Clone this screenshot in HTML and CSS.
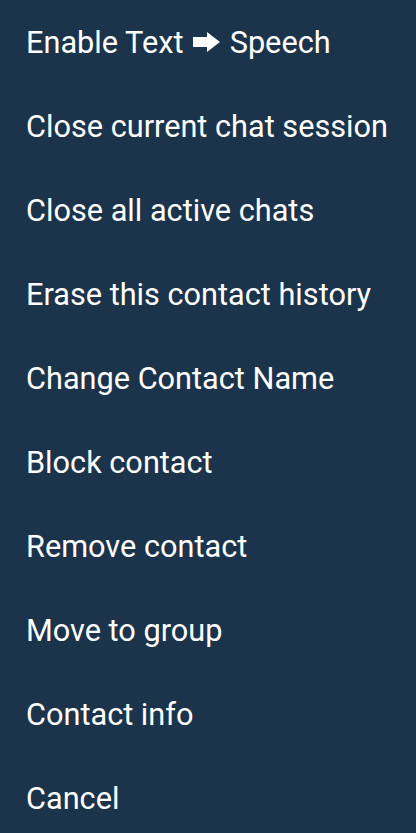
FILE: index.html
```html
<!DOCTYPE html>
<html>
<head>
<meta charset="utf-8">
<link rel="stylesheet" href="styles.css">
</head>
<body>
<ul class="menu">
  <li class="item">Enable Text <svg class="arrow" width="27" height="20" viewBox="0 0 27 20"><path d="M0 5H14V0L27 10L14 20V15H0Z" fill="#fff"/></svg> Speech</li>
  <li class="item">Close current chat session</li>
  <li class="item">Close all active chats</li>
  <li class="item">Erase this contact history</li>
  <li class="item">Change Contact Name</li>
  <li class="item">Block contact</li>
  <li class="item">Remove contact</li>
  <li class="item">Move to group</li>
  <li class="item">Contact info</li>
  <li class="item">Cancel</li>
</ul>
</body>
</html>
```
FILE: styles.css
```css
html, body {
  margin: 0;
  padding: 0;
  background: #1b344b;
}
.menu {
  list-style: none;
  margin: 0;
  padding: 0;
  display: flex;
  flex-direction: column;
}
.item {
  height: 84px;
  display: flex;
  align-items: center;
  padding-left: 26px;
  font-family: Roboto, "Noto Sans", sans-serif;
  font-size: 30.7px;
  color: #ffffff;
  white-space: pre;
}
.arrow {
  margin: 0 2px;
}
```
